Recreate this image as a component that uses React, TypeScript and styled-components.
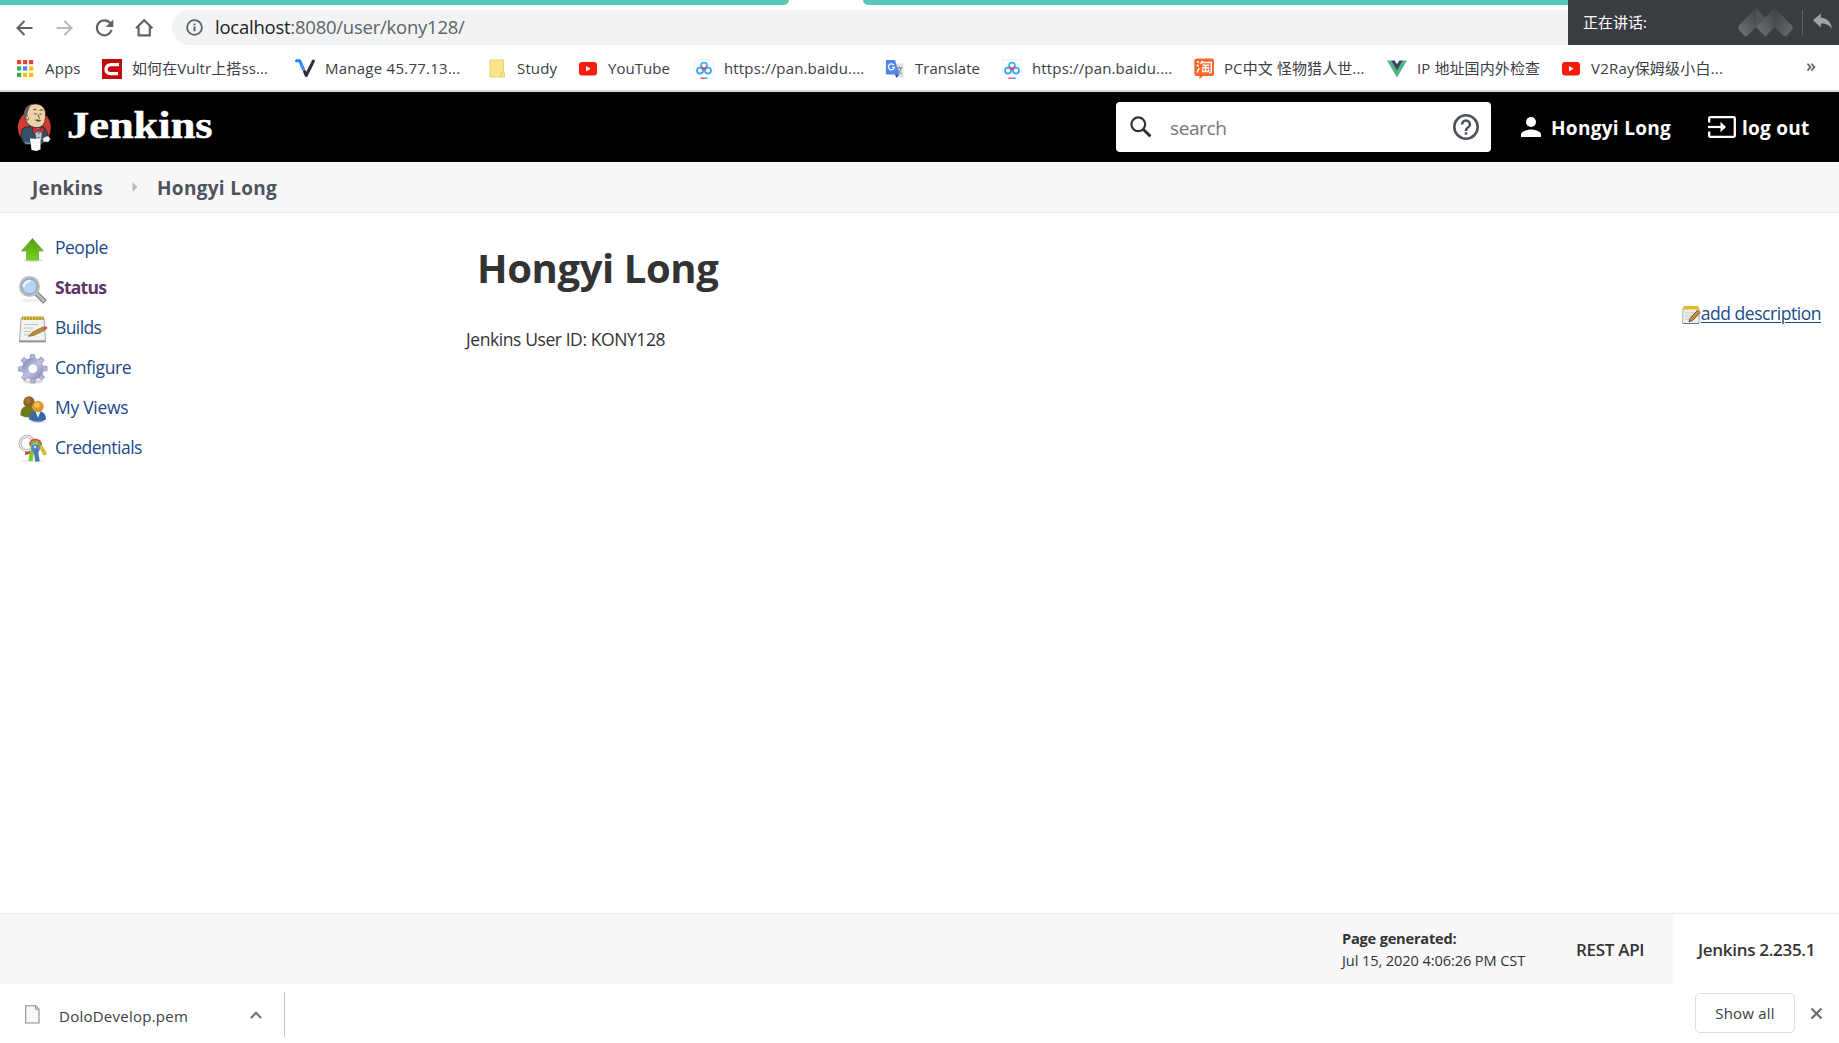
import React from "react";
import styled, { createGlobalStyle } from "styled-components";

const Global = createGlobalStyle`
  * { box-sizing: border-box; }
  body { margin: 0; background: #fff; overflow: hidden; }
  svg { display: block; flex: none; overflow: visible; }
`;

const Screen = styled.div`
  width: 1839px;
  height: 1043px;
  display: flex;
  flex-direction: column;
  background: #fff;
  color: #333;
  font-family: "Open Sans", "Noto Sans CJK SC", sans-serif;
  font-size: 17.5px;
  position: relative;
`;

const Label = styled.span<{ $ls?: number; $size?: number; $weight?: number; $color?: string }>`
  white-space: nowrap;
  letter-spacing: ${(p) => p.$ls ?? 0}px;
  ${(p) => p.$size && `font-size: ${p.$size}px;`}
  ${(p) => p.$weight && `font-weight: ${p.$weight};`}
  ${(p) => p.$color && `color: ${p.$color};`}
`;

/* ---------- browser chrome ---------- */

const TabStrip = styled.div`
  height: 5px;
  display: flex;
  justify-content: space-between;
  background: #fff;
`;
const TabEdge = styled.div<{ $w: number; $side: "left" | "right" }>`
  width: ${(p) => p.$w}px;
  background: #58c9b9;
  border-radius: ${(p) => (p.$side === "left" ? "0 0 6px 0" : "0 0 0 6px")};
`;
const Toolbar = styled.div`
  height: 40px;
  padding: 5px 0 0 14px;
  display: flex;
  align-items: stretch;
`;
const NavButton = styled.div`
  width: 40px;
  display: flex;
  align-items: center;
`;
const Omnibox = styled.div`
  flex: 1;
  margin-left: -2px;
  padding-left: 14px;
  display: flex;
  align-items: center;
  gap: 12px;
  background: #f1f3f4;
  border-radius: 17.5px 0 0 17.5px;
`;
const Address = styled.div`
  padding-bottom: 2px;
`;
const Bookmarks = styled.div`
  height: 47px;
  padding: 2px 0 0 15px;
  display: flex;
  align-items: center;
  border-bottom: 2px solid #d5d7da;
  font-size: 15px;
  color: #3c4043;
`;
const Bookmark = styled.div<{ $w: number }>`
  width: ${(p) => p.$w}px;
  display: flex;
  align-items: center;
  gap: 10px;
`;
const BookmarkText = styled.div`
  padding-bottom: 2px;
`;
const IconSlot = styled.div`
  width: 20px;
  flex: none;
  display: flex;
  justify-content: center;
  align-items: center;
`;
const More = styled.div`
  margin-left: 75px;
  padding-bottom: 7px;
  font-size: 18px;
  font-weight: 600;
  color: #5f6368;
`;
const Talking = styled.div`
  position: absolute;
  top: 0;
  right: 0;
  width: 271px;
  height: 45px;
  padding: 0 7px 2px 15px;
  display: flex;
  align-items: center;
  background: #393c41;
  color: #fff;
  font-size: 15px;
`;
const TalkRight = styled.div`
  margin-left: auto;
  display: flex;
  align-items: center;
`;
const TalkLine = styled.div`
  width: 1px;
  height: 25px;
  margin: 1px 10px 0 9px;
  background: #606367;
`;

/* ---------- Jenkins header ---------- */

const Header = styled.header`
  height: 70px;
  padding: 0 27px 0 17px;
  display: flex;
  align-items: center;
  background: #000;
  color: #fff;
`;
const Wordmark = styled.div`
  margin: 0 0 2px 15px;
  font: bold 37px/44px "Liberation Serif", serif;
  -webkit-text-stroke: 0.5px #fff;
  transform: scaleX(1.2);
  transform-origin: 0 50%;
`;
const SearchBox = styled.div`
  width: 375px;
  height: 50px;
  margin-left: auto;
  padding: 0 12px 0 14px;
  display: flex;
  align-items: center;
  background: #fff;
  border-radius: 4px;
  color: #757575;
`;
const SearchText = styled.div`
  flex: 1;
  padding: 2px 0 0 18px;
`;
const HeaderLink = styled.div<{ $ml: number; $gap: number; $w: number }>`
  width: ${(p) => p.$w}px;
  margin-left: ${(p) => p.$ml}px;
  display: flex;
  align-items: center;
  gap: ${(p) => p.$gap}px;
  font-size: 19px;
  font-weight: 700;
`;
const HeaderText = styled.div`
  padding-top: 2px;
`;

const Crumbs = styled.nav`
  height: 51px;
  padding-left: 32px;
  display: flex;
  align-items: center;
  background: #f8f8f8;
  border-bottom: 1px solid #ececec;
  color: #4d545d;
  font-size: 19px;
  font-weight: 700;
`;
const CrumbCell = styled.div<{ $w?: number }>`
  width: ${(p) => (p.$w ? `${p.$w}px` : "auto")};
  padding-top: 2px;
`;
const CrumbSep = styled.div`
  width: 25px;
`;

/* ---------- page body ---------- */

const Body = styled.main`
  flex: 1;
  min-height: 0;
  display: flex;
`;
const Side = styled.aside`
  width: 466px;
  padding: 16px 0 0 17px;
`;
const Task = styled.div`
  height: 40px;
  display: flex;
  align-items: center;
  gap: 6px;
  color: #204a87;
`;
const TaskText = styled.div`
  padding-bottom: 4px;
`;
const Panel = styled.section`
  flex: 1;
  padding: 25px 18px 0 0;
  display: flex;
  flex-direction: column;
`;
const Title = styled.h1`
  margin: 0 0 0 11px;
  font-size: 40px;
  line-height: 60px;
  font-weight: 700;
  color: #333;
`;
const Describe = styled.div`
  align-self: flex-end;
  height: 34px;
  display: flex;
  align-items: center;
  color: #204a87;
`;
const DescribeLink = styled.a<{ $ls: number }>`
  padding-bottom: 4px;
  letter-spacing: ${(p) => p.$ls}px;
  text-decoration: underline;
  text-underline-offset: 2px;
  text-decoration-thickness: 1px;
`;
const UserId = styled.div`
  line-height: 24px;
  margin-top: -5px;
`;

/* ---------- footer and download shelf ---------- */

const Footer = styled.footer`
  height: 71px;
  display: flex;
  justify-content: flex-end;
  background: #f8f8f8;
  border-top: 1px solid #ececec;
`;
const Generated = styled.div`
  width: 234px;
  padding-top: 13px;
  display: flex;
  flex-direction: column;
  font-size: 14.6px;
  line-height: 22px;
`;
const FootCell = styled.div<{ $w: number; $pad: number; $white?: boolean }>`
  width: ${(p) => p.$w}px;
  padding-left: ${(p) => p.$pad}px;
  display: flex;
  align-items: center;
  font-size: 17px;
  font-weight: 600;
  background: ${(p) => (p.$white ? "#fff" : "transparent")};
`;
const Shelf = styled.div`
  height: 59px;
  display: flex;
  color: #3c4043;
  font-size: 15px;
`;
const Download = styled.div`
  width: 285px;
  height: 45px;
  margin-top: 8px;
  padding: 0 22px 0 25px;
  display: flex;
  align-items: center;
  border-right: 1px solid #c4c4c4;
`;
const FileName = styled.div`
  flex: 1;
  padding: 2px 0 0 19px;
`;
const ShelfRight = styled.div`
  height: 58px;
  margin-left: auto;
  padding-right: 16px;
  display: flex;
  align-items: center;
  gap: 15px;
`;
const ShowAll = styled.button`
  width: 100px;
  height: 40px;
  padding: 0;
  border: 1px solid #dadce0;
  border-radius: 5px;
  background: #fff;
  color: #3c4043;
  font: inherit;
`;

/* ---------- icons ---------- */

const Back = ({ color, flip }: { color: string; flip?: boolean }) => (
  <svg width="21" height="20" viewBox="0 0 21 20" transform={flip ? "scale(-1 1)" : undefined}>
    <path d="M18.5 10H4M10.5 3L3.5 10l7 7" fill="none" stroke={color} strokeWidth="2.1" />
  </svg>
);
const Reload = () => (
  <svg width="20" height="20" viewBox="0 0 20 20">
    <path d="M16.3 5.2A7.5 7.5 0 1 0 17.6 12" fill="none" stroke="#5f6368" strokeWidth="2.1" />
    <path d="M19.3 1.5v7.6h-7.6z" fill="#5f6368" />
  </svg>
);
const Home = () => (
  <svg width="20" height="20" viewBox="0 0 20 20">
    <path d="M2 10.3L10.2 2.2l8.2 8.1M4.6 8.5V17.4h11.2V8.5" fill="none" stroke="#5f6368" strokeWidth="2.1" />
  </svg>
);
const Info = () => (
  <svg width="17" height="17" viewBox="0 0 17 17">
    <circle cx="8.5" cy="8.5" r="7.4" fill="none" stroke="#5f6368" strokeWidth="1.8" />
    <path d="M8.5 7.6v4.7M8.5 4.4v1.8" stroke="#5f6368" strokeWidth="1.9" />
  </svg>
);
const appColors = ["#ea4335", "#ea4335", "#ea4335", "#34a853", "#4285f4", "#fbbc05", "#34a853", "#fbbc05", "#fbbc05"];
const AppsIcon = () => (
  <svg width="16" height="17" viewBox="0 0 16 17">
    {appColors.map((c, i) => (
      <rect key={i} x={(i % 3) * 6} y={Math.floor(i / 3) * 6.4} width="4.2" height="4.2" fill={c} />
    ))}
  </svg>
);
const RedC = () => (
  <svg width="20" height="20" viewBox="0 0 20 20">
    <rect width="20" height="20" fill="#c40b0b" />
    <path d="M17 5.600H9.500C6 5.600 4.200 7.500 4 10.200S5.600 14.600 8.500 14.600H16" fill="none" stroke="#fff" strokeWidth="3.2" />
  </svg>
);
const VultrIcon = () => (
  <svg width="20" height="19" viewBox="0 0 20 19">
    <path d="M1.500 1.800h3.300L7.900 9" fill="none" stroke="#2d83f5" strokeWidth="3" strokeLinejoin="round" strokeLinecap="round" />
    <path d="M6 5l2.800 6.200" stroke="#4094fa" strokeWidth="3" />
    <path d="M9.500 12.500l1.700 4L18.400 2" fill="none" stroke="#2a2f38" strokeWidth="3" strokeLinejoin="round" strokeLinecap="round" />
  </svg>
);
const FolderIcon = () => (
  <svg width="16" height="19" viewBox="0 0 16 19">
    <path d="M1 1h13.5v12l1 1v4H1z" fill="#fbe48b" stroke="#f0d264" strokeWidth="1" />
    <path d="M12.2 18v-4.2l2.3-1.2" fill="none" stroke="#e6c34e" />
  </svg>
);
const YouTube = () => (
  <svg width="18" height="14" viewBox="0 0 18 14">
    <rect width="18" height="13.5" rx="3" fill="#f61b0d" />
    <path d="M7 4.1v5.4l4.6-2.7z" fill="#fff" />
  </svg>
);
const Baidu = () => (
  <svg width="20" height="20" viewBox="0 0 20 20">
    <rect x=".5" y=".5" width="19" height="19" rx="2" fill="#fff" stroke="#f0f0f0" />
    <circle cx="6" cy="11.6" r="3" fill="none" stroke="#36a6f5" strokeWidth="1.8" />
    <circle cx="14" cy="11.6" r="3" fill="none" stroke="#36a6f5" strokeWidth="1.8" />
    <circle cx="10" cy="6.7" r="3" fill="none" stroke="#35b6f7" strokeWidth="1.8" />
    <path d="M7.4 8.1L10 10.3l2.6-2.2" fill="none" stroke="#ee4256" strokeWidth="1.9" />
    <path d="M6.3 19.2h4" stroke="#ee4256" strokeWidth="1.3" />
    <path d="M10.3 19.2h3.2" stroke="#2f7df4" strokeWidth="1.3" />
  </svg>
);
const TranslateIcon = () => (
  <svg width="20" height="20" viewBox="0 0 20 20">
    <path d="M8 4.5h10.5v14H11z" fill="#dfe1e3" />
    <path d="M11.5 9h6M14.4 7.7V9m1.8.2q-1 4-4.2 5.4m.7-4q1.5 3 4 4.2" fill="none" stroke="#6c7d8a" strokeWidth="1" />
    <path d="M1 1h9l4.400 14.500H2Q.8 15.500.8 14.200z" fill="#4e86ec" />
    <path d="M9.800 15.500h4.500l-2.800 3.200z" fill="#2b45b5" />
    <path d="M8.900 6.100A3 3 0 1 0 9.400 8.300H6.900" fill="none" stroke="#fff" strokeWidth="1.3" />
  </svg>
);
const TaoIcon = () => (
  <svg width="20" height="21" viewBox="0 0 20 21">
    <path d="M2.500 .5h15Q20 .5 20 3v12.500q0 2.500-2.500 2.500H9l-3.500 3V18h-3Q.3 18 .3 15.500V3Q.3.5 2.500 .5z" fill="#f2672c" />
    <g fill="none" stroke="#fff" strokeWidth="1.500">
      <path d="M3 3.500l2 1.200M2.700 7l2 1.200M3 14.500l2.300-4.300" />
      <path d="M8.500 2.800L6.700 6M8 4.500h9.300v8.700q0 1.800-2 1.500M8.500 7.200h6.700M7.800 9.800h7.700M11.600 7v6M8.600 11.200v2.300h6v-2.300" />
    </g>
  </svg>
);
const VueIcon = () => (
  <svg width="20" height="18" viewBox="0 0 20 18">
    <path d="M0 .4h4L10 10.600 16 .4h4L10 17.500z" fill="#4fb784" />
    <path d="M4 .4h3.700L10 4.300 12.300.4H16L10 10.700z" fill="#34495e" />
  </svg>
);
const TalkLogo = () => (
  <svg width="55" height="30" viewBox="0 0 55 30">
    <defs>
      <linearGradient id="mm" x1="0" y1="1" x2="1" y2="0">
        <stop offset="0" stopColor="#73777b" />
        <stop offset="1" stopColor="#3e4146" />
      </linearGradient>
      <linearGradient id="mr" x1="0" y1="0" x2="1" y2="1">
        <stop offset="0" stopColor="#3e4146" />
        <stop offset="1" stopColor="#686b6f" />
      </linearGradient>
    </defs>
    <path d="M18 1v19L9.500 28.500Q7.500 30 6 28.500L.8 22.500Q-.5 20.500 1 18.500z" fill="url(#mm)" />
    <path d="M18 1l9.500 10-9.500 9z" fill="#505358" />
    <path d="M36.500 1v19L27.500 29.500 18 20z" fill="url(#mm)" />
    <path d="M36.500 1L54 18.500q1.500 2 0 4l-5 6q-2 1.500-4 0L36.500 20z" fill="url(#mr)" />
  </svg>
);
const Reply = () => (
  <svg width="19" height="17" viewBox="0 0 19 17">
    <path d="M0 7.200L7.800.5v4.200c7 .3 10.500 4.500 11 11.300-2.300-4-5.500-5.500-11-5.500v4z" fill="#a0a2a5" />
  </svg>
);
const Butler = () => (
  <svg width="35" height="48" viewBox="0 0 35 48">
    <ellipse cx="17.300" cy="24.500" rx="16.500" ry="17.500" fill="#cf3a35" />
    <path d="M6 39C3 33 4 27 6.500 25l7-2 13 1c3 2 5 9 4.500 13l-7 4.500H8z" fill="#365063" stroke="#17212a" strokeWidth=".8" />
    <path d="M17 25.500h8.500L24 37h-4z" fill="#b9c8d2" />
    <path d="M7.500 12C7 4 13 .6 19 1c6 .3 9.500 4.500 9.500 10 0 7-1 12-7 13.500C14 25.500 8 20 7.500 12z" fill="#efd2aa" stroke="#3b2c28" strokeWidth=".8" />
    <path d="M7.700 15C5.500 7 10 2 15.500 1.200 11.500 4 11.500 8 10.300 11.500L12 16l-1.500 2z" fill="#686065" />
    <path d="M11 12.500q-3-.5-2 2.700l2 2" fill="#efd2aa" stroke="#5d443a" strokeWidth=".7" />
    <path d="M16 7q2-1.500 3.500 0M22.500 7.500q1.800-1.500 3.500 0M17 10.800h2.600M22.500 11h2M21 11.500l1.500 4" fill="none" stroke="#463831" strokeWidth=".9" />
    <path d="M17.500 16.800q4-1 6.800.7-2.500 2.600-6.800-.7z" fill="#5b4a43" />
    <path d="M15.500 24.200l5 2.300 6-2.200.5 5.500-6-1.300-5.500 2z" fill="#cb2e34" stroke="#541a20" strokeWidth=".5" />
    <path d="M21.500 31l1-1.500M21 34.500h1.500" stroke="#365063" strokeWidth="1" />
    <path d="M25.500 35.500q3.500-3 6-2.500l2 3-2 3h-5z" fill="#f4f1ed" stroke="#454548" strokeWidth=".5" />
    <path d="M13 35.500l10.500.5v10.500l-4 1.500-5-1z" fill="#fafafa" />
    <path d="M8 39.500q3 1.500 5 .5" stroke="#9eb5c2" fill="none" />
  </svg>
);
const SearchGlass = () => (
  <svg width="22" height="22" viewBox="0 0 22 22">
    <circle cx="8.300" cy="8.300" r="6.900" fill="none" stroke="#333" strokeWidth="2.200" />
    <path d="M13.200 13.200l7.200 7.200" stroke="#333" strokeWidth="2.900" />
  </svg>
);
const Help = () => (
  <svg width="26" height="26" viewBox="0 0 24 24">
    <path fill="#4d545d" d="M11 18h2v-2h-2v2zm1-16a10 10 0 1 0 0 20 10 10 0 0 0 0-20zm0 18a8 8 0 1 1 0-16 8 8 0 0 1 0 16zm0-14a4 4 0 0 0-4 4h2a2 2 0 1 1 4 0c0 2-3 1.750-3 5h2c0-2.250 3-2.500 3-5a4 4 0 0 0-4-4z" transform="translate(-2.400 -2.400) scale(1.200)" />
  </svg>
);
const Person = () => (
  <svg width="20" height="20" viewBox="0 0 20 20">
    <circle cx="10" cy="5" r="5" fill="#fff" />
    <path d="M0 20v-2.500C0 14.200 6.700 12.500 10 12.500s10 1.700 10 5V20z" fill="#fff" />
  </svg>
);
const Logout = () => (
  <svg width="28" height="22" viewBox="0 0 28 22">
    <path d="M1.200 6.500V2.200q0-1 1-1h23.600q1 0 1 1v17.600q0 1-1 1H2.200q-1 0-1-1V15.500" fill="none" stroke="#fff" strokeWidth="2.300" />
    <path d="M0 11h15" stroke="#fff" strokeWidth="2.200" />
    <path d="M12.500 5.800L18 11l-5.500 5.200z" fill="#fff" />
  </svg>
);
const UpArrow = () => (
  <svg width="32" height="32" viewBox="0 0 32 32">
    <defs>
      <linearGradient id="up" x1="0" y1="0" x2="0" y2="1">
        <stop offset="0" stopColor="#4e9a1d" />
        <stop offset="1" stopColor="#78d415" />
      </linearGradient>
    </defs>
    <ellipse cx="16" cy="27.500" rx="10" ry="1.500" fill="#ddd" />
    <path d="M15.500 5.500L26.500 18h-5v9h-12v-9h-5z" fill="url(#up)" stroke="#72a64d" strokeWidth=".8" />
  </svg>
);
const Magnifier = () => (
  <svg width="32" height="32" viewBox="0 0 32 32">
    <ellipse cx="15" cy="27.500" rx="12" ry="1.700" fill="#eee" />
    <path d="M19 20l9 9" stroke="#777" strokeWidth="5" />
    <path d="M19 20l8.500 8.500" stroke="#bbb" strokeWidth="2.800" />
    <circle cx="12.500" cy="13.500" r="9" fill="#b9d3f3" stroke="#bcbebb" strokeWidth="3" />
    <circle cx="12.500" cy="13.500" r="7.600" fill="none" stroke="#739ac9" strokeWidth="1" />
    <path d="M6.500 14q1-6 7-6" stroke="#ecf4fd" strokeWidth="2.600" fill="none" />
  </svg>
);
const Notepad = () => (
  <svg width="32" height="32" viewBox="0 0 32 32">
    <path d="M4 5h23l1.500 24H2.500z" fill="#f2f2ef" stroke="#aaa" />
    <path d="M2.500 28.200h26" stroke="#8d8d89" strokeWidth="1.500" />
    <path d="M5 3.500h21.500V7H5z" fill="#b39a2c" />
    <path d="M6.500 3v4M9.500 3v4M12.500 3v4M15.500 3v4M18.500 3v4M21.500 3v4M24.500 3v4" stroke="#e0cb60" strokeWidth="1" />
    <path d="M7 11.500h14M7 15h9M7 18.500h7M7 22h5" stroke="#c4c4c4" strokeWidth="1" />
    <path d="M15 19.500L26 14l2 3-11.500 5.500-5 .8z" fill="#c88f33" stroke="#76521c" strokeWidth=".7" />
    <path d="M26 14l3-.8q2 1.300 1 2.500L28 17z" fill="#d3564b" />
  </svg>
);
const NoteEdit = () => (
  <svg width="19" height="20" viewBox="0 0 19 20">
    <path d="M1 3h16v15.500H.5z" fill="#eee" stroke="#999" strokeWidth=".8" />
    <path d="M1 18.500h16" stroke="#777" strokeWidth="1" />
    <path d="M1.500 1h15v3.500h-15z" fill="#e2bd2a" />
    <path d="M3 8h10M3 11h7M3 14h5" stroke="#c8c8c8" />
    <path d="M8 13.500L15.500 5.200l2.700 2.300-7.500 7.800-3.700 1.500z" fill="#c88e42" stroke="#684516" strokeWidth=".9" />
  </svg>
);
const Gear = () => (
  <svg width="32" height="32" viewBox="0 0 32 32">
    <defs>
      <linearGradient id="gr" x1="0" y1="0" x2="1" y2="1">
        <stop offset="0" stopColor="#8f93be" />
        <stop offset=".5" stopColor="#bcc2df" />
        <stop offset="1" stopColor="#9094ba" />
      </linearGradient>
    </defs>
    <ellipse cx="16" cy="28.500" rx="10" ry="2" fill="#ddd" />
    <g fill="url(#gr)" stroke="#888db5" strokeWidth=".6">
      {[0, 45, 90, 135, 180, 225, 270, 315].map((a) => (
        <path key={a} d="M12.700 8l.8-6.500h4.200l.8 6.500z" transform={`rotate(${a} 15.800 15.800)`} />
      ))}
    </g>
    <circle cx="15.800" cy="15.800" r="7.500" fill="none" stroke="url(#gr)" strokeWidth="6.500" />
    <circle cx="15.800" cy="15.800" r="4.200" fill="#fff" />
  </svg>
);
const People = () => (
  <svg width="32" height="32" viewBox="0 0 32 32">
    <path d="M3.500 22.500C3 14 8 12.500 12 13c4 .3 6 3 6 10q-7 3-14.500-.5z" fill="#6b7c1a" />
    <circle cx="12" cy="9" r="5.700" fill="#91611d" />
    <circle cx="11" cy="7.500" r="3" fill="#b18645" opacity=".6" />
    <ellipse cx="21" cy="29" rx="8" ry="1.200" fill="#ddd" />
    <path d="M12 26.500C12 20 15.500 18 21 18c5 0 8 3 8 8.500q-8 4.500-17 0z" fill="#3b68ac" />
    <path d="M18.500 18.500h5L21 25z" fill="#e9eef5" />
    <circle cx="21" cy="13.500" r="5.700" fill="#de9a2b" />
    <circle cx="20" cy="12" r="2.700" fill="#f1c36e" opacity=".8" />
  </svg>
);
const Keys = () => (
  <svg width="32" height="32" viewBox="0 0 32 32">
    <ellipse cx="16" cy="28" rx="12" ry="1.500" fill="#eee" />
    <path d="M20 11.500q6 3 8 10.500" stroke="#d9b93a" strokeWidth="4" fill="none" />
    <path d="M17 14q-4 6-9 6" stroke="#d34232" strokeWidth="3.600" fill="none" />
    <path d="M17 14q-3 6-3.500 14" stroke="#7bc925" strokeWidth="4.200" fill="none" />
    <circle cx="10" cy="10.500" r="7" fill="none" stroke="#a9aaa7" strokeWidth="3" />
    <circle cx="10" cy="10.500" r="7" fill="none" stroke="#eee" strokeWidth="1.400" />
    <path d="M13 12q0-5 5-5.500 6 .5 6 6" fill="none" stroke="#d84b35" strokeWidth="2" />
    <path d="M13.500 14q1-5 5-5 4 .5 5 4" fill="none" stroke="#70ba2d" strokeWidth="2" />
    <circle cx="18.500" cy="15.500" r="4.500" fill="#5a87bf" />
    <path d="M18.500 16l2 12.500" stroke="#4c78b2" strokeWidth="4.500" />
    <circle cx="18" cy="14" r="1.200" fill="#dbe6f2" />
  </svg>
);
const CrumbArrow = () => (
  <svg width="6" height="10" viewBox="0 0 6 10">
    <path d="M.5 0L5.500 5 .5 10z" fill="#bbb" />
  </svg>
);
const FileIcon = () => (
  <svg width="15" height="19" viewBox="0 0 15 19">
    <path d="M.7.7h9.800L14 4.200V18H.7z" fill="#f7f8f9" stroke="#8c8c8c" strokeWidth="1.100" />
    <path d="M10.500.7v3.500H14" fill="none" stroke="#8c8c8c" />
  </svg>
);
const Caret = () => (
  <svg width="12" height="8" viewBox="0 0 12 8">
    <path d="M1 7l5-5.200L11 7" fill="none" stroke="#6a6d71" strokeWidth="2" />
  </svg>
);
const Close = () => (
  <svg width="13" height="13" viewBox="0 0 13 13">
    <path d="M1.500 1.500l10 10m0-10l-10 10" stroke="#6a6d71" strokeWidth="2.200" />
  </svg>
);

const bookmarks = [
  { w: 87, icon: <AppsIcon />, text: "Apps", ls: 0.15 },
  { w: 193, icon: <RedC />, text: "如何在Vultr上搭ss...", ls: 0.1 },
  { w: 192, icon: <VultrIcon />, text: "Manage 45.77.13...", ls: 0.25 },
  { w: 91, icon: <FolderIcon />, text: "Study", ls: 0.15 },
  { w: 116, icon: <YouTube />, text: "YouTube", ls: 0.05 },
  { w: 191, icon: <Baidu />, text: "https://pan.baidu....", ls: 0.15 },
  { w: 117, icon: <TranslateIcon />, text: "Translate", ls: 0 },
  { w: 192, icon: <Baidu />, text: "https://pan.baidu....", ls: 0.15 },
  { w: 193, icon: <TaoIcon />, text: "PC中文 怪物猎人世...", ls: 0.1 },
  { w: 174, icon: <VueIcon />, text: "IP 地址国内外检查", ls: 0.1 },
  { w: 170, icon: <YouTube />, text: "V2Ray保姆级小白...", ls: 0.2 },
];

const tasks = [
  { icon: <UpArrow />, text: "People", ls: -0.5 },
  { icon: <Magnifier />, text: "Status", ls: -0.75, active: true },
  { icon: <Notepad />, text: "Builds", ls: -0.6 },
  { icon: <Gear />, text: "Configure", ls: -0.4 },
  { icon: <People />, text: "My Views", ls: -0.3 },
  { icon: <Keys />, text: "Credentials", ls: -0.5 },
];

export default function App() {
  return (
    <Screen>
      <Global />
      <TabStrip>
        <TabEdge $w={789} $side="left" />
        <TabEdge $w={976} $side="right" />
      </TabStrip>
      <Toolbar>
        <NavButton><Back color="#5f6368" /></NavButton>
        <NavButton><Back color="#b9bbbe" flip /></NavButton>
        <NavButton><Reload /></NavButton>
        <NavButton><Home /></NavButton>
        <Omnibox>
          <Info />
          <Address>
            <Label $size={18.5} $ls={-0.24} $color="#5f6368">
              <Label $color="#202124" $ls={-0.24}>localhost</Label>:8080/user/kony128/
            </Label>
          </Address>
        </Omnibox>
      </Toolbar>
      <Bookmarks>
        {bookmarks.map((b, i) => (
          <Bookmark key={i} $w={b.w}>
            <IconSlot>{b.icon}</IconSlot>
            <BookmarkText><Label $ls={b.ls}>{b.text}</Label></BookmarkText>
          </Bookmark>
        ))}
        <More>»</More>
      </Bookmarks>

      <Header>
        <Butler />
        <Wordmark>Jenkins</Wordmark>
        <SearchBox>
          <SearchGlass />
          <SearchText><Label $size={19} $ls={-0.4}>search</Label></SearchText>
          <Help />
        </SearchBox>
        <HeaderLink $ml={30} $gap={10} $w={157}>
          <Person />
          <HeaderText><Label $ls={0.3}>Hongyi Long</Label></HeaderText>
        </HeaderLink>
        <HeaderLink $ml={30} $gap={6} $w={104}>
          <Logout />
          <HeaderText><Label $ls={0.25}>log out</Label></HeaderText>
        </HeaderLink>
      </Header>

      <Crumbs>
        <CrumbCell $w={100}><Label $ls={0.2}>Jenkins</Label></CrumbCell>
        <CrumbSep><CrumbArrow /></CrumbSep>
        <CrumbCell><Label $ls={0.3}>Hongyi Long</Label></CrumbCell>
      </Crumbs>

      <Body>
        <Side>
          {tasks.map((t) => (
            <Task key={t.text}>
              {t.icon}
              <TaskText>
                <Label $ls={t.ls} $weight={t.active ? 700 : 400} $color={t.active ? "#5c3566" : undefined}>
                  {t.text}
                </Label>
              </TaskText>
            </Task>
          ))}
        </Side>
        <Panel>
          <Title><Label $ls={-0.4}>Hongyi Long</Label></Title>
          <Describe>
            <NoteEdit />
            <DescribeLink $ls={-0.46}>add description</DescribeLink>
          </Describe>
          <UserId><Label $ls={-0.42}>Jenkins User ID: KONY128</Label></UserId>
        </Panel>
      </Body>

      <Footer>
        <Generated>
          <Label $weight={700} $ls={-0.2}>Page generated:</Label>
          <Label $ls={-0.1}>Jul 15, 2020 4:06:26 PM CST</Label>
        </Generated>
        <FootCell $w={97} $pad={0}><Label $ls={-0.3}>REST API</Label></FootCell>
        <FootCell $w={166} $pad={25} $white><Label $ls={-0.3}>Jenkins 2.235.1</Label></FootCell>
      </Footer>
      <Shelf>
        <Download>
          <FileIcon />
          <FileName><Label $ls={0.25}>DoloDevelop.pem</Label></FileName>
          <Caret />
        </Download>
        <ShelfRight>
          <ShowAll><Label $ls={0.2}>Show all</Label></ShowAll>
          <Close />
        </ShelfRight>
      </Shelf>
      <Talking>
        <Label>正在讲话:</Label>
        <TalkRight>
          <TalkLogo />
          <TalkLine />
          <Reply />
        </TalkRight>
      </Talking>
    </Screen>
  );
}
